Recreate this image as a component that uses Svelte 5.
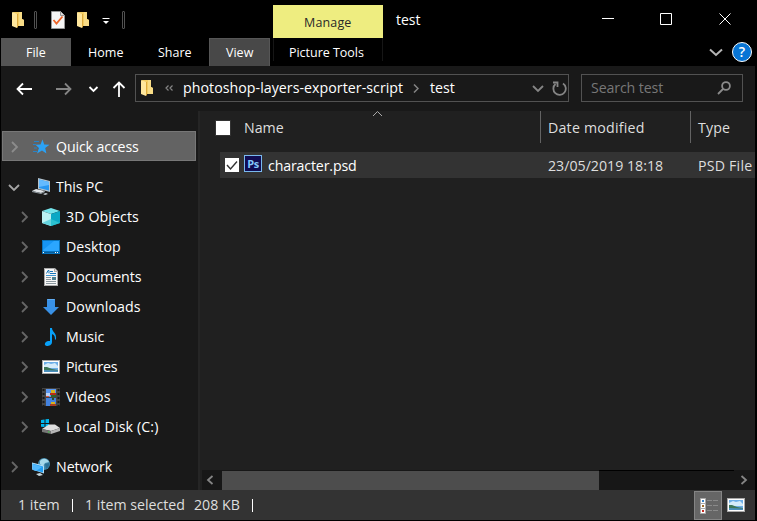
<script>
  const places = [
    { name: 'Quick access', icon: 'star', level: 0, selected: true, ls: -0.13 },
    { name: 'This PC', icon: 'pc', level: 0, open: true, gap: 11, ls: -0.15 },
    { name: '3D Objects', icon: 'cube', level: 1, ls: 0.1 },
    { name: 'Desktop', icon: 'desktop', level: 1, ls: 0 },
    { name: 'Documents', icon: 'doc', level: 1, ls: -0.06 },
    { name: 'Downloads', icon: 'down', level: 1, ls: 0.06 },
    { name: 'Music', icon: 'music', level: 1, ls: -0.1 },
    { name: 'Pictures', icon: 'picture', level: 1, ls: -0.25 },
    { name: 'Videos', icon: 'video', level: 1, ls: 0.1 },
    { name: 'Local Disk (C:)', icon: 'disk', level: 1, ls: 0.12 },
    { name: 'Network', icon: 'network', level: 0, gap: 10, ls: -0.05 }
  ];
</script>

{#snippet folder()}
  <svg width="13" height="18" viewBox="0 0 13 18">
    <path d="M1 1h9v7l2 1v6H3z" fill="#f3cd63" />
    <path d="M7 1h3v7l2 1v6H7z" fill="#f8dc86" />
    <path d="M0 1l5 2v14l-5-2z" fill="#ffe79d" />
    <path d="M5 3v14l1-1V3z" fill="#dca93c" />
  </svg>
{/snippet}

{#snippet picture()}
  <svg width="20" height="20" viewBox="0 0 20 20">
    <path d="M1 3h18v14H1z" fill="#a8a8a8" /><path d="M2 4h16v12H2z" fill="#fff" />
    <path d="M3 5h14v10H3z" fill="#6caee8" /><path d="M3 8l4-2 3 1 4-1 3 3v2H3z" fill="#d4ebfa" />
    <path d="M3 10l3 0 5 2 6 1v1H3z" fill="#3d7658" /><path d="M3 13l14 .5V15H3z" fill="#4a8fbd" />
  </svg>
{/snippet}

{#snippet icon(name)}
  {#if name === 'picture'}
    {@render picture()}
  {:else}
    <svg width="20" height="20" viewBox="0 0 20 20">
      {#if name === 'star'}
        <path d="M11.500 2.500l1.700 5 5.300.2-4.300 3.300 1.200 5.500-4.400-3-5 3 2-5.500-3.500-3.300 5-.2z" fill="#2ba2f5" />
        <path d="M3 4.500h5M2 7.500h3M3 11h3M2 14.500h4" stroke="#2584c9" />
      {:else if name === 'pc'}
        <path d="M7 1l12 3v11L7 12z" fill="#b6c3cc" /><path d="M8 2.500l10 2.500v8.500L8 11z" fill="#2897f2" />
        <path d="M8 2.500l10 2.500v3L8 10z" fill="#64baff" />
        <path d="M1 14l4-2 9 2-4 2z" fill="#e1e5e8" /><path d="M1 14l9 2 4-2v1l-4 2-9-2z" fill="#929ca2" />
        <path d="M12 17l3-1 2 1-3 1z" fill="#cbd4da" />
      {:else if name === 'cube'}
        <path d="M1 4l9-3 9 3-9 3z" fill="#74e4eb" /><path d="M1 4l9 3v12l-9-3z" fill="#bcf2f3" />
        <path d="M10 7l9-3v12l-9 3z" fill="#0ba8c5" /><path d="M1 16l9-4v7z" fill="#65d4df" /><path d="M10 12l9 4-9 3z" fill="#2bc1d0" />
      {:else if name === 'desktop'}
        <path d="M1 3h18v14H1z" fill="#0874be" /><path d="M2 4h16v10H2z" fill="#1695f5" />
        <path d="M2 13L13 4h5v10H2z" fill="#2ba6ff" /><path d="M2 15h16v1H2z" fill="#075a98" />
        <path d="M2 15.500h1m11 0h1m1 0h1" stroke="#fff" />
      {:else if name === 'doc'}
        <path d="M3 1h11l3 3v15H3z" fill="#aaa" /><path d="M4 2h9v3h3v13H4z" fill="#f8f8f8" />
        <path d="M14 2v2h2z" fill="#e4e4e4" />
        <path d="M5.500 6.500l1.500-3h1v3M9 4.500h3M9 6.500h6" stroke="#1976b8" fill="none" />
        <path d="M5 8.500h10" stroke="#3b97d4" /><path d="M5 10.500h5M5 12.500h5M5 14.500h10M5 16.500h10" stroke="#8b979e" />
        <path d="M11 10h4v3h-4z" fill="#4c8192" />
      {:else if name === 'down'}
        <path d="M6 2h8v8h4l-8 8-8-8h4z" fill="#3991e6" /><path d="M6.500 2.500h7" stroke="#63adf0" />
      {:else if name === 'music'}
        <path d="M9 1h2c0 4 5 5 4 11l-1 1c0-4-1-5-3-6v8c0 3-3 4-5 4-3 0-3-4 1-5h2z" fill="#08a0f7" />
      {:else if name === 'video'}
        <path d="M1 1h18v18H1z" fill="#444" />
        <path d="M2.500 2v17M17.500 2v17" stroke="#181818" stroke-width="2" stroke-dasharray="2 2" />
        <path d="M5 2h10v8H5z" fill="#5b97ee" /><path d="M5 11h10v8H5z" fill="#4482df" />
        <path d="M5 6h4v3H5z" fill="#b8d1f7" /><path d="M10 3h4v4h-4z" fill="#d6b21e" /><path d="M9 6h6v2H9z" fill="#b72b1c" />
        <path d="M10 8h5v2h-5z" fill="#2e6428" /><path d="M5 9h3v1H5z" fill="#d55545" />
        <path d="M10 15h4v2h-4z" fill="#d6b21e" /><path d="M9 17h6v2H9z" fill="#a73d25" /><path d="M11 11h2v2h-2z" fill="#294c30" />
      {:else if name === 'disk'}
        <path d="M0 3l3.500-.5V6H0zM4.500 2.300L8 2v4H4.500zM0 7h3.500v3L0 9.700zM4.500 7H8v3.500l-3.500-.4z" fill="#00b7ef" />
        <path d="M1 12l7-4.500h6l5 3.500-9 3z" fill="#dedede" /><path d="M1 12l9 2v3l-9-2z" fill="#777" />
        <path d="M10 14l9-3v3l-9 3z" fill="#b6b6b6" /><path d="M7 15h1.500" stroke="#36d43c" />
      {:else if name === 'network'}
        <circle cx="13" cy="7" r="6" fill="#438cae" /><path d="M9 4c3-4 8-2 9 1l-4 1-2 3-3-2z" fill="#a7d9ea" />
        <path d="M14 7l4-1c1 2-1 5-3 6z" fill="#2c7095" />
        <path d="M1 5.500l12 3v8l-3-1-9-3z" fill="#b3dff6" /><path d="M1.500 6.500l10.500 3v6l-10.500-3z" fill="#229df2" />
        <path d="M2 7l9 3-6 4-3-1z" fill="#50b8fc" /><path d="M5 17l4-1 3 2-4 1z" fill="#c3d5dd" />
      {/if}
    </svg>
  {/if}
{/snippet}

<div class="window">
  <header class="top">
    <div class="left">
      <div class="quick">
        <span class="f1">{@render folder()}</span><i class="grip g1"></i>
        <svg class="props" width="14" height="18" viewBox="0 0 14 18">
          <path d="M.5.500h9l4 4v13H.5z" fill="#f5f5f5" stroke="#969696" /><path d="M9.500.500v4h4" fill="#ddd" stroke="#969696" />
          <path d="M2.500 9l3 3.500L11.500 5.500" fill="none" stroke="#ee6427" stroke-width="1.800" />
        </svg>
        <span class="f2">{@render folder()}</span>
        <svg class="drop" width="8" height="8" viewBox="0 0 8 8"><path d="M.5 1.500h7" stroke="#fff" /><path d="M1 4h6L4 7z" fill="#fff" /></svg>
        <i class="grip"></i>
      </div>
      <nav class="tabs">
        <span class="tab file">File</span><span class="tab home">Home</span><span class="tab share">Share</span><span class="tab view">View</span>
      </nav>
    </div>
    <div class="context"><span class="manage">Manage</span><span class="tools">Picture Tools</span></div>
    <div class="right">
      <div class="caption">
        <span class="title">test</span>
        <svg width="129" height="12" viewBox="0 0 129 12" fill="none" stroke="#fff">
          <path d="M0 5.500h12M58.500.500h11v11h-11z" /><path d="M117.500.500l11 11M128.500.500l-11 11" />
        </svg>
      </div>
      <div class="help">
        <svg width="14" height="9" viewBox="0 0 14 9"><path d="M1 1.500l6 5.500 6-5.500" fill="none" stroke="#b5b5b5" stroke-width="2" /></svg>
        <span class="q">?</span>
      </div>
    </div>
  </header>

  <div class="location">
    <svg class="arrows" width="112" height="18" viewBox="0 0 112 18" fill="none" stroke="#fff" stroke-width="1.800">
      <path d="M16 9H1.500M7 3.500L1.500 9 7 14.500" /><path d="M40 9h14.500M49 3.500L54.500 9 49 14.500" stroke="#858585" />
      <path d="M73.500 7l4 4 4-4" /><path d="M103 17V3M97.500 8L103 2.500 108.500 8" />
    </svg>
    <div class="address">
      {@render folder()}
      <svg class="dbl" width="8" height="6" viewBox="0 0 8 6" fill="none" stroke="#858585" stroke-width="1.200"><path d="M3.500.500L1 3l2.500 2.500M7.500.500L5 3l2.500 2.500" /></svg>
      <span class="path">photoshop-layers-exporter-script</span>
      <svg class="sep" width="6" height="9" viewBox="0 0 6 9"><path d="M1 .5l4 4-4 4" fill="none" stroke="#858585" stroke-width="1.500" /></svg>
      <span class="leaf">test</span>
      <svg class="reload" width="36" height="16" viewBox="0 0 36 16" fill="none" stroke="#858585" stroke-width="1.800">
        <path d="M2 6l5 5 5-5" /><path d="M32 3.500a6.200 6.200 0 1 1-7.500.5" /><path d="M22 2.500h4.500V7" />
      </svg>
    </div>
    <div class="search">
      <span>Search test</span>
      <svg width="14" height="14" viewBox="0 0 14 14" fill="none" stroke="#8b8b8b" stroke-width="1.800"><circle cx="9" cy="5" r="3.900" /><path d="M6 8L1 13" /></svg>
    </div>
  </div>

  <main>
    <aside>
      {#each places as p}
        <div class="place" class:selected={p.selected} class:child={p.level === 1} style:margin-top="{p.gap ?? 0}px" style:letter-spacing="{p.ls}px">
          <svg class="chev" width="12" height="12" viewBox="0 0 12 12" fill="none" stroke={p.open ? '#a5a5a5' : p.selected ? '#8c8c8c' : '#666'} stroke-width="1.800">
            <path d={p.open ? 'M1 4l5 5 5-5' : 'M4 1l5 5-5 5'} />
          </svg>
          {@render icon(p.icon)}
          <span>{p.name}</span>
        </div>
      {/each}
    </aside>
    <section>
      <div class="columns">
        <div class="col name">
          <i class="box"></i><span>Name</span>
          <svg class="sort" width="11" height="6" viewBox="0 0 11 6"><path d="M1 5l4.500-4.500L10 5" fill="none" stroke="#aaa" /></svg>
        </div>
        <div class="col date">Date modified</div>
        <div class="col type">Type</div>
      </div>
      <div class="row">
        <svg class="check" width="14" height="14" viewBox="0 0 14 14"><path d="M0 0h14v14H0z" fill="#fff" /><path d="M2 7l3.500 4L12 3.500" fill="none" stroke="#333" stroke-width="1.400" /></svg>
        <span class="ps">Ps</span>
        <span class="fname">character.psd</span><span class="fdate">23/05/2019 18:18</span><span class="ftype">PSD File</span>
      </div>
      <div class="scroll">
        <svg width="8" height="10" viewBox="0 0 8 10"><path d="M6.500 1l-4.500 4 4.500 4" fill="none" stroke="#858585" stroke-width="1.800" /></svg>
        <i class="thumb"></i><i class="track"></i>
        <svg width="8" height="10" viewBox="0 0 8 10"><path d="M1.500 1L6 5 1.500 9" fill="none" stroke="#858585" stroke-width="1.800" /></svg>
      </div>
    </section>
  </main>

  <footer>
    <span class="s1">1 item</span><i></i><span class="s2">1 item selected</span><span class="s3">208 KB</span><i class="last"></i>
    <span class="details">
      <svg width="20" height="18" viewBox="0 0 20 18">
        <path d="M.5 1.500h5v15h-5z" fill="#fff" stroke="#aaa" /><path d="M0 6.500h6M0 11.500h6" stroke="#aaa" />
        <path d="M2 3h2v2H2z" fill="#3b82c4" /><path d="M2 8h2v2H2z" fill="#a06d2d" /><path d="M2 13h2v2H2z" fill="#c52b23" />
        <path d="M7 3.500h5m1 0h5M7 8.500h5m1 0h5M7 13.500h5m1 0h5" stroke="#8a8a8a" />
      </svg>
    </span>
    <span class="large">{@render picture()}</span>
  </footer>
</div>

<style>
  :global(body) { margin: 0; background: #000; }
  .window { width: 757px; height: 521px; box-sizing: border-box; padding: 0 2px 1px 1px; display: flex; flex-direction: column; background: #000; color: #fff; font: 14.2px/20px 'Open Sans', 'Noto Sans', sans-serif; white-space: nowrap; overflow: hidden; }
  .window * { box-sizing: border-box; }
  svg { display: block; flex: none; }
  span { flex: none; }
  .top { display: flex; height: 66px; flex: none; font-size: 12.500px; }
  .left { width: 272px; }
  .quick { height: 38px; display: flex; align-items: center; padding: 2px 0 0 11px; }
  .grip { width: 3px; height: 18px; border: 1px solid #515151; border-radius: 1px; margin-top: -1px; }
  .g1 { margin: -1px 14px 0 9px; }
  .f2 { margin-left: 12px; }
  .drop { margin: 2px 12px 0 12px; }
  .tabs { display: flex; height: 28px; }
  .tab { display: flex; align-items: center; padding-top: 1px; }
  .file { width: 70px; background: #555; padding-left: 25px; }
  .home { padding-left: 17px; width: 87px; letter-spacing: .05px; }
  .share { width: 51px; }
  .view { background: #484848; border: 1px solid #565656; border-bottom: 0; width: 61px; padding-left: 16px; }
  .context { width: 110px; padding-top: 5px; display: flex; flex-direction: column; }
  .manage { height: 33px; background: #eeed80; color: #292929; display: flex; align-items: center; padding: 2px 0 0 31px; letter-spacing: .15px; }
  .tools { height: 23px; border: 1px solid #161616; border-width: 0 1px; padding: 5px 0 0 15px; letter-spacing: -.03px; }
  .right { flex: 1; }
  .caption { height: 38px; display: flex; align-items: center; justify-content: space-between; padding: 0 24px 0 13px; }
  .title { font-size: 14px; margin-top: 2px; }
  .help { height: 28px; display: flex; align-items: center; justify-content: flex-end; gap: 9px; padding-right: 3px; }
  .q { width: 20px; height: 20px; border-radius: 50%; border: 1px solid #fff; background: #0875d5; text-align: center; font-size: 14px; line-height: 18px; font-weight: 600; }
  .location { height: 45px; flex: none; display: flex; padding-top: 8px; background: #191919; }
  .arrows { margin: 6px 7px 0 15px; }
  .address { width: 434px; height: 28px; border: 1px solid #525252; display: flex; align-items: center; padding: 0 1px 0 5px; }
  .dbl { margin: 0 10px 0 11px; }
  .path { width: 220px; letter-spacing: .04px; }
  .sep { margin: 0 11px 0 10px; }
  .reload { margin-left: auto; }
  .search { width: 162px; height: 28px; margin-left: 12px; border: 1px solid #525252; display: flex; align-items: center; justify-content: space-between; padding: 0 11px 0 9px; color: #777; letter-spacing: -.12px; }
  main { height: 379px; flex: none; display: flex; }
  aside { width: 199px; background: #191919; border-right: 2px solid #252525; padding: 20px 2px 0 1px; }
  .place { height: 30px; display: flex; align-items: center; padding-left: 6px; }
  .place.child { padding-left: 16px; }
  .chev { margin-right: 11px; }
  .place span { margin-left: 5px; }
  .selected { background: #636363; border: 1px solid #777; padding-left: 5px; padding-top: 1px; }
  section { flex: 1; background: #202020; display: flex; flex-direction: column; min-width: 0; }
  .columns { height: 32px; display: flex; color: #dedede; }
  .col { display: flex; align-items: center; padding-top: 1px; }
  .name { width: 340px; padding-left: 15px; position: relative; }
  .box { width: 16px; height: 16px; background: #fff; border: 1px solid #333; margin-right: 13px; }
  .sort { position: absolute; left: 172px; top: 0; }
  .date { width: 150px; border-left: 1px solid #636363; padding-left: 7px; letter-spacing: .22px; }
  .type { border-left: 1px solid #636363; padding-left: 7px; letter-spacing: .15px; }
  .row { margin: 9px 0 0 20px; height: 26px; background: #333; display: flex; align-items: center; padding: 1px 0 0 5px; }
  .check { margin-top: -1px; }
  .ps { width: 18px; height: 17px; background: #100c52; border: 1px solid #79b9ee; margin: -5px 6px 0 5px; color: #83c8fb; font-size: 11px; line-height: 15px; text-align: center; font-weight: 700; letter-spacing: -.5px; }
  .fname { width: 280px; letter-spacing: -.15px; }
  .fdate { width: 150px; color: #dedede; }
  .ftype { color: #dedede; letter-spacing: .2px; }
  .scroll { margin: auto 0 0 2px; height: 20px; background: #171717; display: flex; align-items: center; padding: 0 7px 0 4px; }
  .thumb { width: 377px; height: 19px; background: #4d4d4d; margin: 1px 0 0 8px; flex: none; }
  .track { width: 135px; height: 20px; border-top: 1px solid #000; margin-right: 6px; }
  footer { height: 30px; flex: none; background: #333; display: flex; align-items: center; color: #dedede; padding-left: 17px; }
  footer i { width: 1px; height: 13px; background: #fff; }
  .s1 { width: 54px; }
  .s2 { margin-left: 12px; width: 109px; }
  .s3 { width: 58px; }
  .details { margin-left: 441px; width: 28px; height: 29px; margin-top: 1px; background: #666; border: 1px solid #858585; padding: 5px 0 0 5px; }
  .large { margin-left: 4px; margin-top: -1px; }
</style>
